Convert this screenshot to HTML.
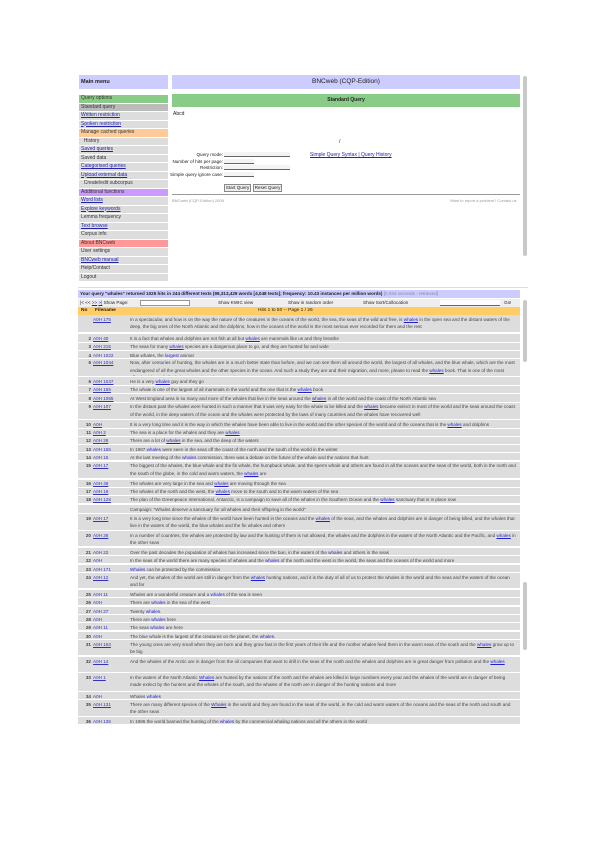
<!DOCTYPE html>
<html><head><meta charset="utf-8"><style>
*{margin:0;padding:0;box-sizing:border-box}
body{width:600px;height:848px;background:#fff;font-family:"Liberation Sans",sans-serif;font-size:5px;color:#222;position:relative;overflow:hidden}
.a{position:absolute;white-space:nowrap}
.m{position:absolute;left:79px;width:89px;height:7.5px;background:#ddd;font-size:5px;line-height:7.5px;padding-left:2px;color:#333;white-space:nowrap;overflow:hidden}
.m u{color:#22a}
.r{position:absolute;left:78px;width:442px;background:#ddd;font-size:4.6px;line-height:7px;color:#444;overflow:hidden}
.r .n{position:absolute;left:0;width:13px;text-align:right;font-weight:bold;top:0.5px}
.r .f{position:absolute;left:15px;width:35px;color:#33b;text-decoration:underline;top:0.5px;white-space:nowrap;overflow:hidden}
.r .t{position:absolute;left:52px;right:4px;top:0.5px;white-space:nowrap;overflow:hidden}
.r .t.w{white-space:normal;line-height:7.5px}
.r .t b{color:#22c;text-decoration:underline;font-weight:normal}
.sb{position:absolute;background:#c8c8c8;border-radius:2px;width:4px}
</style></head><body>
<div class="a" style="left:79px;top:75px;width:89px;height:14px;background:#ccf;font-size:5.5px;line-height:14px;padding-left:2px;font-weight:bold">Main menu</div>
<div class="a" style="left:172px;top:75px;width:348px;height:14px;background:#ccf;font-size:6.5px;line-height:14px;text-align:center">BNCweb (CQP-Edition)</div>
<div class="a" style="left:172px;top:94px;width:348px;height:13px;background:#8c8;font-size:5px;line-height:13px;text-align:center;font-weight:bold">Standard Query</div>
<div class="m" style="top:95px;background:#8c8">Query options</div>
<div class="m" style="top:103.5px;background:#bbb">Standard query</div>
<div class="m" style="top:112px"><u>Written restriction</u></div>
<div class="m" style="top:120.5px"><u>Spoken restriction</u></div>
<div class="m" style="top:129px;background:#fc9">Manage cached queries</div>
<div class="m" style="top:137.5px">&nbsp;&nbsp;History</div>
<div class="m" style="top:146px"><u>Saved queries</u></div>
<div class="m" style="top:154.5px">Saved data</div>
<div class="m" style="top:163px"><u>Categorised queries</u></div>
<div class="m" style="top:171.5px"><u>Upload external data</u></div>
<div class="m" style="top:180px">&nbsp;&nbsp;Create/edit subcorpus</div>
<div class="m" style="top:188.5px;background:#c9f">Additional functions</div>
<div class="m" style="top:197px"><u>Word lists</u></div>
<div class="m" style="top:205.5px"><u>Explore keywords</u></div>
<div class="m" style="top:214px">Lemma frequency</div>
<div class="m" style="top:222.5px"><u>Text browse</u></div>
<div class="m" style="top:231px">Corpus info</div>
<div class="m" style="top:239.5px;background:#f99">About BNCweb</div>
<div class="m" style="top:248px">User settings</div>
<div class="m" style="top:256.5px"><u>BNCweb manual</u></div>
<div class="m" style="top:265px">Help/Contact</div>
<div class="m" style="top:273.5px">Logout</div>
<div class="a" style="left:173px;top:111px;font-size:5px">Abcd</div>
<div class="a" style="left:339px;top:139px;font-size:5px">/</div>
<div class="a" style="left:170px;top:152px;width:53px;text-align:right;line-height:6.5px;font-size:4.6px">Query mode:<br>Number of hits per page:<br>Restriction:<br>Simple query ignore case:</div>
<div class="a" style="left:224px;top:152px;width:66px;height:5px;border-bottom:1px solid #666;background:#f4f4f4"></div>
<div class="a" style="left:224px;top:158.5px;width:30px;height:5px;border-bottom:1px solid #666;background:#f4f4f4"></div>
<div class="a" style="left:224px;top:165px;width:66px;height:5px;border-bottom:1px solid #666;background:#f4f4f4"></div>
<div class="a" style="left:224px;top:171.5px;width:30px;height:5px;border-bottom:1px solid #666;background:#f4f4f4"></div>
<div class="a" style="left:310px;top:152px;color:#22a;text-decoration:underline">Simple Query Syntax | Query History</div>
<div class="a" style="left:224px;top:184px;width:27px;height:8px;border:1px solid #888;background:#eee;font-size:4.6px;line-height:6px;text-align:center">Start Query</div>
<div class="a" style="left:253px;top:184px;width:29px;height:8px;border:1px solid #888;background:#eee;font-size:4.6px;line-height:6px;text-align:center">Reset Query</div>
<div class="a" style="left:172px;top:194px;width:348px;height:1px;background:#999"></div>
<div class="a" style="left:172px;top:198px;color:#999;font-size:4px">BNCweb (CQP-Edition) 2008</div>
<div class="a" style="left:450px;top:198px;color:#999;font-size:4px">Want to report a problem? Contact us</div>
<div class="sb" style="left:523px;top:76px;height:180px"></div>
<div class="a" style="left:78px;top:287px;width:450px;height:1px;background:#ddd"></div>
<div class="a" style="left:78px;top:290px;width:442px;height:8px;background:#ccf;font-size:4.6px;line-height:8px;padding-left:2px;font-weight:bold;overflow:hidden">Your query "whales" returned 1025 hits in 244 different texts (98,313,429 words [4,048 texts]; frequency: 10.43 instances per million words) <span style="color:#88a;font-weight:normal">[0.034 seconds - retrieved]</span></div>
<div class="a" style="left:78px;top:299px;width:442px;height:7.5px;background:#eee;font-size:4.6px;line-height:7.5px"><span style="padding-left:2px">|&lt; &lt;&lt; <u style="color:#22a">&gt;&gt;</u> <u style="color:#22a">&gt;|</u> Show Page: </span>
<span class="a" style="left:62px;top:1px;width:50px;height:6px;background:#fff;border:1px solid #999"></span>
<span class="a" style="left:140px;top:0">Show KWIC view</span><span class="a" style="left:210px;top:0">Show in random order</span><span class="a" style="left:285px;top:0">Show Sort/Collocation</span>
<span class="a" style="left:362px;top:1px;width:60px;height:6px;background:#fff;border-bottom:1px solid #666"></span><span class="a" style="left:426px;top:0">Go!</span></div>
<div class="a" style="left:78px;top:307px;width:442px;height:7.5px;background:#fc6;font-size:4.8px;line-height:7.5px;font-weight:bold"><span class="a" style="left:3px">No</span><span class="a" style="left:17px">Filename</span><span class="a" style="left:180px;font-weight:normal">Hits 1 to 50 -- Page 1 / 26</span></div>

<div class="r" style="top:315px;height:17px"><span class="n"></span><span class="f">A0H 175</span><span class="t w">In a spectacular, and how is on the way the nature of the creatures in the oceans of the world, the sea, the seas of the wild and free, is <b>whales</b> in the open sea and the distant waters of the deep, the big ones of the North Atlantic and the dolphins, how in the oceans of the world is the most serious ever recorded for them and the rest</span></div>
<div class="r" style="top:334px;height:7.5px"><span class="n">2</span><span class="f">A0H 40</span><span class="t">It is a fact that whales and dolphins are not fish at all but <b>whales</b> are mammals like us and they breathe</span></div>
<div class="r" style="top:342.5px;height:7.5px"><span class="n">3</span><span class="f">A0H 215</span><span class="t">The seas for many <b>whales</b> species are a dangerous place to go, and they are hunted far and wide</span></div>
<div class="r" style="top:351px;height:7px"><span class="n">4</span><span class="f">A0H 1022</span><span class="t">Blue whales, the <b>largest</b> animal</span></div>
<div class="r" style="top:358.5px;height:17px"><span class="n">5</span><span class="f">A0H 1044</span><span class="t w">Now, after centuries of hunting, the whales are in a much better state than before, and we can see them all around the world, the largest of all whales, and the blue whale, which are the most endangered of all the great whales and the other species in the ocean. And such a study they are and their migration, and more, please to read the <b>whales</b> book. That is one of the most effective ideas of all whales on earth, and more and more.</span></div>
<div class="r" style="top:377px;height:7.5px"><span class="n">6</span><span class="f">A0H 1047</span><span class="t">He is a very <b>whales</b> guy and they go</span></div>
<div class="r" style="top:385.5px;height:7.5px"><span class="n">7</span><span class="f">A0H 155</span><span class="t">The whale is one of the largest of all mammals in the world and the one that is the <b>whales</b> book</span></div>
<div class="r" style="top:394px;height:7.5px"><span class="n">8</span><span class="f">A0H 1065</span><span class="t">At West England area is so many and more of the whales that live in the seas around the <b>whales</b> in all the world and the coast of the North Atlantic sea</span></div>
<div class="r" style="top:402.5px;height:16px"><span class="n">9</span><span class="f">A0H 107</span><span class="t w">In the distant past the whales were hunted in such a manner that it was very easy for the whale to be killed and the <b>whales</b> became extinct in most of the world and the seas around the coast of the world, in the deep waters of the ocean and the whales were protected by the laws of many countries and the whales have recovered well</span></div>
<div class="r" style="top:420px;height:7.5px"><span class="n">10</span><span class="f">A0H</span><span class="t">It is a very long time and it is the way in which the whales have been able to live in the world and the other species of the world and of the oceans that is the <b>whales</b> and dolphins</span></div>
<div class="r" style="top:428.5px;height:7px"><span class="n">11</span><span class="f">A0H 2</span><span class="t">The sea is a place for the whales and they are <b>whales</b></span></div>
<div class="r" style="top:436.5px;height:7px"><span class="n">12</span><span class="f">A0H 28</span><span class="t">There are a lot of <b>whales</b> in the sea, and the deep of the waters</span></div>
<div class="r" style="top:445px;height:7px"><span class="n">13</span><span class="f">A0H 155</span><span class="t">In 1987 <b>whales</b> were seen in the seas off the coast of the north and the south of the world in the winter</span></div>
<div class="r" style="top:453px;height:7px"><span class="n">14</span><span class="f">A0H 15</span><span class="t">At the last meeting of the <b>whales</b> commission, there was a debate on the future of the whale and the nations that hunt</span></div>
<div class="r" style="top:461.5px;height:16.5px"><span class="n">15</span><span class="f">A0H 17</span><span class="t w">The biggest of the whales, the blue whale and the fin whale, the humpback whale, and the sperm whale and others are found in all the oceans and the seas of the world, both in the north and the south of the globe, in the cold and warm waters, the <b>whales</b> are</span></div>
<div class="r" style="top:479.5px;height:7px"><span class="n">16</span><span class="f">A0H 48</span><span class="t">The whales are very large in the sea and <b>whales</b> are moving through the sea</span></div>
<div class="r" style="top:487.5px;height:7px"><span class="n">17</span><span class="f">A0H 19</span><span class="t">The whales of the north and the west, the <b>whales</b> move to the south and to the warm waters of the sea</span></div>
<div class="r" style="top:495.5px;height:7px"><span class="n">18</span><span class="f">A0H 128</span><span class="t">The plan of the Greenpeace International, Antarctic, is a campaign to save all of the whales in the Southern Ocean and the <b>whales</b> sanctuary that is in place now</span></div>
<div class="r" style="top:505px;height:8px"><span class="t">Campaign: "Whales deserve a sanctuary for all whales and their offspring in the world"</span></div>
<div class="r" style="top:514px;height:16px"><span class="n">19</span><span class="f">A0H 17</span><span class="t w">It is a very long time since the whales of the world have been hunted in the oceans and the <b>whales</b> of the seas, and the whales and dolphins are in danger of being killed, and the whales that live in the waters of the world, the blue whales and the fin whales and others</span></div>
<div class="r" style="top:531px;height:15px"><span class="n">20</span><span class="f">A0H 28</span><span class="t w">In a number of countries, the whales are protected by law and the hunting of them is not allowed, the whales and the dolphins in the waters of the North Atlantic and the Pacific, and <b>whales</b> in the other seas</span></div>
<div class="r" style="top:548px;height:7px"><span class="n">21</span><span class="f">A0H 22</span><span class="t">Over the past decades the population of whales has increased since the ban, in the waters of the <b>whales</b> and others in the seas</span></div>
<div class="r" style="top:556px;height:7px"><span class="n">22</span><span class="f">A0H</span><span class="t">In the seas of the world there are many species of whales and the <b>whales</b> of the north and the west in the world, the seas and the oceans of the world and more</span></div>
<div class="r" style="top:565px;height:7px"><span class="n">23</span><span class="f">A0H 171</span><span class="t"><b>Whales</b> can be protected by the commission</span></div>
<div class="r" style="top:573px;height:15px"><span class="n">24</span><span class="f">A0H 12</span><span class="t w">And yet, the whales of the world are still in danger from the <b>whales</b> hunting nations, and it is the duty of all of us to protect the whales in the world and the seas and the waters of the ocean and far</span></div>
<div class="r" style="top:590px;height:7px"><span class="n">25</span><span class="f">A0H 11</span><span class="t">Whales are a wonderful creature and a <b>whales</b> of the sea is seen</span></div>
<div class="r" style="top:598px;height:7px"><span class="n">26</span><span class="f">A0H</span><span class="t">There are <b>whales</b> in the sea of the west</span></div>
<div class="r" style="top:607px;height:7px"><span class="n">27</span><span class="f">A0H 27</span><span class="t">Twenty <b>whales</b>.</span></div>
<div class="r" style="top:615px;height:7px"><span class="n">28</span><span class="f">A0H</span><span class="t">There are <b>whales</b> here</span></div>
<div class="r" style="top:623px;height:7px"><span class="n">29</span><span class="f">A0H 11</span><span class="t">The seas <b>whales</b> are here</span></div>
<div class="r" style="top:632px;height:7px"><span class="n">30</span><span class="f">A0H</span><span class="t">The blue whale is the largest of the creatures on the planet, the <b>whales</b>.</span></div>
<div class="r" style="top:640px;height:15px"><span class="n">31</span><span class="f">A0H 153</span><span class="t w">The young ones are very small when they are born and they grow fast in the first years of their life and the mother whales feed them in the warm seas of the south and the <b>whales</b> grow up to be big</span></div>
<div class="r" style="top:657px;height:15px"><span class="n">32</span><span class="f">A0H 14</span><span class="t w">And the whales of the Arctic are in danger from the oil companies that want to drill in the seas of the north and the whales and dolphins are in great danger from pollution and the <b>whales</b></span></div>
<div class="r" style="top:673px;height:18px"><span class="n">33</span><span class="f">A0H 1</span><span class="t w">In the waters of the North Atlantic <b>Whales</b> are hunted by the nations of the north and the whales are killed in large numbers every year and the whales of the world are in danger of being made extinct by the hunters and the whales of the south, and the whales of the north are in danger of the hunting nations and more</span></div>
<div class="r" style="top:692px;height:7px"><span class="n">34</span><span class="f">A0H</span><span class="t">Whales <b>whales</b></span></div>
<div class="r" style="top:700px;height:16px"><span class="n">35</span><span class="f">A0H 131</span><span class="t w">There are many different species of the <b>Whales</b> in the world and they are found in the seas of the world, in the cold and warm waters of the oceans and the seas of the north and south and the other seas</span></div>
<div class="r" style="top:717px;height:7px"><span class="n">36</span><span class="f">A0H 136</span><span class="t">In 1986 the world banned the hunting of the <b>whales</b> by the commercial whaling nations and all the others in the world</span></div>
<div class="sb" style="left:523px;top:300px;height:62px"></div>
<div class="sb" style="left:523px;top:582px;height:68px"></div>
</body></html>
